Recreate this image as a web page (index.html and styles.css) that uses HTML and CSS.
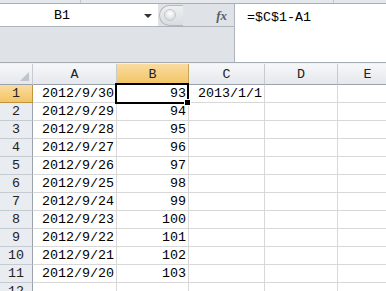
FILE: index.html
```html
<!DOCTYPE html>
<html>
<head>
<meta charset="utf-8">
<link rel="stylesheet" href="styles.css">
</head>
<body>
<div class="app">
  <div class="edge"><div class="edge-seg"></div><div class="edge-seg2"></div></div>
  <div class="fbar">
    <div class="fleft">
      <div class="frow">
        <div class="namebox"><span class="nb-text">B1</span><span class="nb-arrow"></span></div>
        <div class="pill"><span class="pill-knob"></span></div>
        <div class="fx">fx</div>
      </div>
      <div class="fpad"></div>
    </div>
    <div class="formula">=$C$1-A1</div>
  </div>
  <div class="sep"></div>
  <div class="sheet">
    <div class="grid">
      <div class="hd corner"><span class="tri"></span></div>
      <div class="hd col">A</div>
      <div class="hd col sel">B</div>
      <div class="hd col">C</div>
      <div class="hd col">D</div>
      <div class="hd col">E</div>

      <div class="rh sel">1</div><div class="c">2012/9/30</div><div class="c">93</div><div class="c">2013/1/1</div><div class="c"></div><div class="c"></div>
      <div class="rh">2</div><div class="c">2012/9/29</div><div class="c">94</div><div class="c"></div><div class="c"></div><div class="c"></div>
      <div class="rh">3</div><div class="c">2012/9/28</div><div class="c">95</div><div class="c"></div><div class="c"></div><div class="c"></div>
      <div class="rh">4</div><div class="c">2012/9/27</div><div class="c">96</div><div class="c"></div><div class="c"></div><div class="c"></div>
      <div class="rh">5</div><div class="c">2012/9/26</div><div class="c">97</div><div class="c"></div><div class="c"></div><div class="c"></div>
      <div class="rh">6</div><div class="c">2012/9/25</div><div class="c">98</div><div class="c"></div><div class="c"></div><div class="c"></div>
      <div class="rh">7</div><div class="c">2012/9/24</div><div class="c">99</div><div class="c"></div><div class="c"></div><div class="c"></div>
      <div class="rh">8</div><div class="c">2012/9/23</div><div class="c">100</div><div class="c"></div><div class="c"></div><div class="c"></div>
      <div class="rh">9</div><div class="c">2012/9/22</div><div class="c">101</div><div class="c"></div><div class="c"></div><div class="c"></div>
      <div class="rh">10</div><div class="c">2012/9/21</div><div class="c">102</div><div class="c"></div><div class="c"></div><div class="c"></div>
      <div class="rh">11</div><div class="c">2012/9/20</div><div class="c">103</div><div class="c"></div><div class="c"></div><div class="c"></div>
      <div class="rh">12</div><div class="c"></div><div class="c"></div><div class="c"></div><div class="c"></div><div class="c"></div>
    </div>
    <div class="cursor"><span class="handle"></span></div>
  </div>
</div>
</body>
</html>
```

FILE: styles.css
```css
html, body {
  margin: 0;
  padding: 0;
  background: #ffffff;
  overflow: hidden;
}
.app {
  width: 386px;
  height: 291px;
  overflow: hidden;
  font-family: "Liberation Mono", "DejaVu Sans Mono", monospace;
  font-size: 13.33px;
  color: #000;
}
.edge {
  height: 3px;
  background: #e4e7eb;
  border-bottom: 1px solid #a9afb6;
  display: flex;
}
.edge-seg {
  width: 80px;
  border-right: 1px solid #c3c8ce;
}
.edge-seg2 {
  width: 252px;
  border-right: 1px solid #c3c8ce;
}
.fbar {
  display: flex;
  height: 58px;
  background: #dfe3e8;
  border-bottom: 1px solid #a6acb3;
}
.fleft {
  width: 234px;
  display: flex;
  flex-direction: column;
}
.frow {
  height: 22px;
  display: flex;
  align-items: center;
  border-bottom: 1px solid #aeb4bb;
}
.namebox {
  width: 158px;
  height: 22px;
  background: #ffffff;
  display: flex;
  align-items: center;
}
.nb-text {
  flex: 1;
  text-align: center;
  padding-right: 20px;
  padding-top: 2px;
  line-height: 20px;
}
.nb-arrow {
  width: 0;
  height: 0;
  border-left: 4px solid transparent;
  border-right: 4px solid transparent;
  border-top: 4px solid #333;
  margin-right: 6px;
  margin-top: 2px;
}
.pill {
  width: 24px;
  height: 21px;
  margin-left: 1px;
  border-radius: 11px 0 0 11px;
  border: 1px solid #b4b9bf;
  border-right: none;
  background: linear-gradient(#eef0f2, #d8dce1);
  display: flex;
  align-items: center;
  padding-left: 4px;
  box-sizing: border-box;
}
.pill-knob {
  width: 10px;
  height: 10px;
  border-radius: 50%;
  background: radial-gradient(circle at 50% 35%, #ffffff, #cdd1d6);
  border: 1px solid #c4c8cd;
}
.fx {
  flex: 1;
  text-align: right;
  padding-right: 7px;
  padding-top: 1px;
  font-family: "Liberation Serif", serif;
  font-style: italic;
  font-weight: bold;
  font-size: 13px;
  color: #5a5f66;
  line-height: 21px;
}
.fpad {
  flex: 1;
}
.formula {
  flex: 1;
  background: #ffffff;
  border-left: 1px solid #aeb4bb;
  padding: 5px 0 0 12px;
  line-height: 18px;
}
.sep {
  height: 1px;
  background: #eef0f3;
}
.sheet {
  position: relative;
}
.grid {
  display: grid;
  grid-template-columns: 33px 84px 72px 76px 73px 60px;
  grid-auto-rows: 18px;
  grid-template-rows: 21px;
}
.hd {
  background: linear-gradient(#f6f7f9, #e5e8ec);
  border-right: 1px solid #c6cbd1;
  border-bottom: 1px solid #9aa3ad;
  box-sizing: border-box;
  text-align: center;
  padding-top: 2px;
  line-height: 18px;
  color: #222;
}
.hd.col {
  font-family: "Liberation Mono", monospace;
}
.hd.sel, .rh.sel {
  background: linear-gradient(#f9dc9f, #f2c465);
  border-right-color: #c9a35a;
  border-bottom-color: #c2923d;
}
.corner {
  position: relative;
}
.tri {
  position: absolute;
  right: 3px;
  bottom: 3px;
  width: 0;
  height: 0;
  border-left: 9px solid transparent;
  border-bottom: 9px solid #c0c5cb;
}
.rh {
  background: #e9ecf0;
  border-right: 1px solid #9aa3ad;
  border-bottom: 1px solid #c6cbd1;
  box-sizing: border-box;
  text-align: center;
  padding-top: 1px;
  line-height: 16px;
  color: #222;
}
.rh.sel {
  border-right-color: #c2923d;
}
.c {
  border-right: 1px solid #d8d8d8;
  border-bottom: 1px solid #d8d8d8;
  box-sizing: border-box;
  text-align: right;
  padding-right: 2px;
  padding-top: 1px;
  line-height: 16px;
  white-space: nowrap;
}
.cursor {
  position: absolute;
  left: 115px;
  top: 19px;
  width: 74px;
  height: 21px;
  border: 2px solid #000;
  box-sizing: border-box;
}
.handle {
  position: absolute;
  right: -4px;
  bottom: -4px;
  width: 5px;
  height: 5px;
  background: #000;
  border: 1px solid #fff;
}
```
